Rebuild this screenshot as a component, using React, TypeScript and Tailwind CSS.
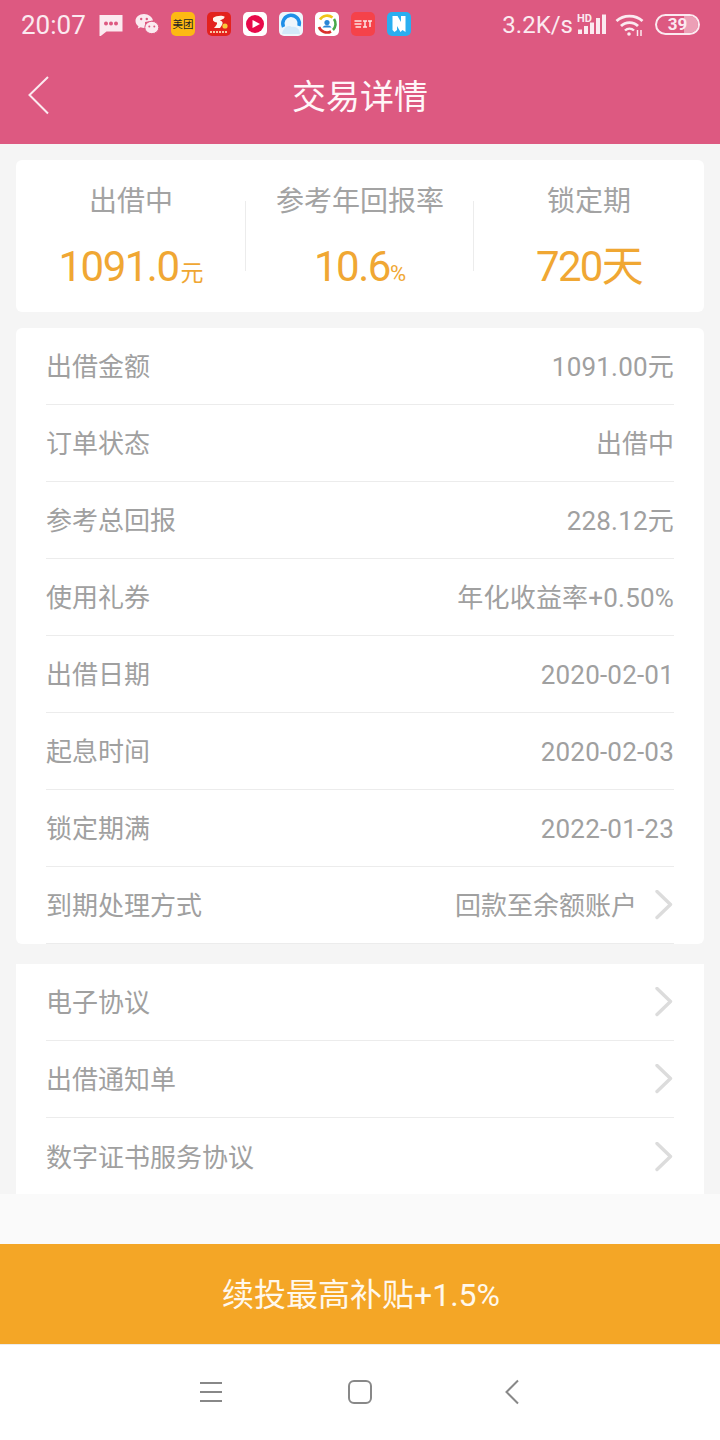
import React from "react";

const Chevron = () => (
  <svg width="20" height="30" viewBox="0 0 20 30" className="shrink-0" fill="none">
    <path d="M3 1.5 L16.5 14.5 L3 27.5" stroke="#dcdcdc" strokeWidth="3.4" strokeLinecap="round" strokeLinejoin="round" />
  </svg>
);

const Tile = ({ bg, children }: { bg: string; children: React.ReactNode }) => (
  <svg width="24" height="24" viewBox="0 0 24 24" className="shrink-0">
    <rect width="24" height="24" rx="5" fill={bg} />
    {children}
  </svg>
);

function StatusIcons() {
  return (
    <div className="ml-[13px] flex items-center gap-3">
      <svg width="24" height="24" viewBox="0 0 24 24" className="shrink-0">
        <path d="M0.5 3 H23.5 V19.5 H7.5 L0.5 25 Z" fill="#fbeaf0" />
        <circle cx="7" cy="11.5" r="2" fill="#dd5981" />
        <circle cx="12" cy="11.5" r="2" fill="#dd5981" />
        <circle cx="17" cy="11.5" r="2" fill="#dd5981" />
      </svg>
      <svg width="24" height="24" viewBox="0 0 24 24" className="shrink-0">
        <path d="M9 2 C4.2 2 0.5 5.2 0.5 9 C0.5 11.2 1.7 13 3.5 14.3 L2.8 16.6 L5.6 15.3 C7 15.8 8.5 16 10 15.9 L10 10 L18 8.5 C17.4 5 13.6 2 9 2 Z" fill="#fbeaf0" />
        <ellipse cx="16.8" cy="15.5" rx="7" ry="6.2" fill="#fbeaf0" stroke="#dd5981" strokeWidth="1" />
        <circle cx="6.2" cy="7" r="1.2" fill="#dd5981" />
        <circle cx="11.8" cy="7" r="1.2" fill="#dd5981" />
        <circle cx="14.3" cy="14.5" r="1" fill="#dd5981" />
        <circle cx="19.3" cy="14.5" r="1" fill="#dd5981" />
      </svg>
      <svg width="24" height="24" viewBox="0 0 24 24" className="shrink-0">
        <rect width="24" height="24" rx="5" fill="#fdb913" />
        <text x="12" y="16" textAnchor="middle" fontSize="10.5" fill="#222" fontFamily="'Noto Sans CJK SC', sans-serif">美团</text>
      </svg>
      <Tile bg="#e3211d">
        <path d="M6 6 C9 3.5 15 3 17.5 4.5 C18 6.5 15 7.5 13 8.5 C15 9 16.5 10.5 15 13 L13 16 L7 16 C9 14 10.5 12 10 10.5 C8.5 10.5 7 9.5 6 8.5 Z" fill="#fff4ee" />
        <circle cx="18" cy="14" r="2.6" fill="#f8c93a" />
        <path d="M3 20 H21" stroke="#f9c7a3" strokeWidth="1.8" strokeDasharray="2 1" />
      </Tile>
      <Tile bg="#ffffff">
        <circle cx="12" cy="12" r="9" fill="#e8094a" />
        <path d="M9.5 8 L17 12 L9.5 16 Z" fill="#fff" />
        <path d="M3 19 L8 21 L5 23 Z" fill="#fff" />
      </Tile>
      <Tile bg="#eef6fc">
        <path d="M4.5 15 A8.3 8.3 0 1 1 20 14" fill="none" stroke="#1f8fe8" strokeWidth="3.4" />
        <path d="M3 22 C4 16 9 12 13 15 C17 14 21 17 21 22 Z" fill="#d2e9fa" />
      </Tile>
      <Tile bg="#ffffff">
        <path d="M5 7.5 A8.5 8.5 0 0 1 17.5 5.5" fill="none" stroke="#f0c419" strokeWidth="2.6" />
        <path d="M19 7 A8.5 8.5 0 0 1 18 18" fill="none" stroke="#4aa84a" strokeWidth="2.6" />
        <path d="M16 19.5 A8.5 8.5 0 0 1 4 15" fill="none" stroke="#d9302c" strokeWidth="2.6" />
        <circle cx="12" cy="10.5" r="2.6" fill="#2a86d6" />
        <path d="M7.5 15.5 C9 12.5 15 12.5 16.5 15.5 Z" fill="#2a86d6" />
      </Tile>
      <Tile bg="#f5424a">
        <path d="M3.5 9 H10.5 M3.5 12 H10.5 M4.5 15 H10 M12 9 H16 M14 9 V15 M12 15 H16 M17 9 H21 M19 9 V15" stroke="#fde3e3" strokeWidth="1.5" />
      </Tile>
      <Tile bg="#2aaef0">
        <path d="M5.5 4 H10.5 L14 10 V4 H18.5 V20 L15.5 18 L13.5 20 L10 14 V18 L7.5 20 L5.5 18 Z" fill="#ffffff" />
      </Tile>
    </div>
  );
}

function StatusRight() {
  return (
    <div className="flex items-center">
      <span className="mt-[2px] text-[24px] leading-none text-[#fbeaf0]">3.2K/s</span>
      <svg width="32" height="24" viewBox="0 0 32 24" className="ml-[4px] shrink-0">
        <text x="0" y="9.5" fontSize="11" fontWeight="700" fill="#fbeaf0" fontFamily="Roboto, sans-serif">HD</text>
        <rect x="1" y="17.5" width="4" height="4.5" fill="#fbeaf0" />
        <rect x="7" y="14" width="4" height="8" fill="#fbeaf0" />
        <rect x="13" y="10.5" width="4" height="11.5" fill="#fbeaf0" />
        <rect x="19" y="6" width="4" height="16" fill="#fbeaf0" />
        <rect x="25" y="2.5" width="4" height="19.5" fill="#fbeaf0" />
      </svg>
      <svg width="30" height="24" viewBox="0 0 30 24" className="ml-[6px] shrink-0" fill="none">
        <path d="M1.5 9 C8.5 2.5 20.5 2.5 27.5 9" stroke="#fbeaf0" strokeWidth="2.8" />
        <path d="M6 14 C10.5 9.5 18.5 9.5 23 14" stroke="#fbeaf0" strokeWidth="2.8" />
        <path d="M10 18.5 C12.5 16 16.5 16 19 18.5" stroke="#fbeaf0" strokeWidth="2.4" />
        <circle cx="14" cy="22" r="1.8" fill="#fbeaf0" />
        <path d="M22.5 24 V18 M26 24 V18" stroke="#fbeaf0" strokeWidth="1.5" />
      </svg>
      <div className="relative ml-[10px] mr-5 flex h-[21px] w-[45px] items-center justify-center overflow-hidden rounded-full border-[2px] border-[#fbeaf0]">
        <div className="absolute top-0 right-0 bottom-0 w-[14px] bg-[#ec9fb6]" />
        <span className="relative text-[17px] leading-none font-bold text-[#fbeaf0]">39</span>
      </div>
    </div>
  );
}

const rows1: [string, string, boolean][] = [
  ["出借金额", "1091.00元", true],
  ["订单状态", "出借中", false],
  ["参考总回报", "228.12元", true],
  ["使用礼券", "年化收益率+0.50%", true],
  ["出借日期", "2020-02-01", true],
  ["起息时间", "2020-02-03", true],
  ["锁定期满", "2022-01-23", true],
];

function Row({ label, value, numeric, chevron, last }: { label: string; value?: string; numeric?: boolean; chevron?: boolean; last?: boolean }) {
  return (
    <div className={`flex h-[77px] items-center justify-between border-[#ececec] ${last ? "" : "border-b"}`}>
      <span className="pt-[2px] text-[26px] leading-none text-[#a0a0a0]">{label}</span>
      <div className="flex items-center gap-[17px]">
        {value && (
          <span className={`pt-[2px] text-[26px] leading-none text-[#a0a0a0] ${numeric ? "tracking-[0.2px]" : ""}`}>{value}</span>
        )}
        {chevron && <Chevron />}
      </div>
    </div>
  );
}

function Stat({ title, width, children, divider }: { title: string; width: string; children: React.ReactNode; divider?: boolean }) {
  return (
    <div className={`relative flex flex-col items-center ${width}`}>
      <span className="mt-[26px] text-[28px] leading-[32px] text-[#a3a3a3]">{title}</span>
      <div className="mt-[25px] flex items-baseline leading-[48px] text-[#f0a733]">{children}</div>
      {divider && <div className="absolute top-[41px] right-0 h-[70px] w-px bg-[#ececec]" />}
    </div>
  );
}

export default function App() {
  return (
    <div
      className="flex h-[1440px] w-[720px] flex-col overflow-hidden bg-[#f5f5f5]"
      style={{ fontFamily: "Roboto, 'Noto Sans CJK SC', sans-serif" }}
    >
      <header className="h-[144px] shrink-0 bg-[#dd5981]">
        <div className="flex h-[48px] items-center justify-between pl-[21px]">
          <div className="flex items-center">
            <span className="mt-[2px] text-[26px] leading-none text-[#fbeaf0]">20:07</span>
            <StatusIcons />
          </div>
          <StatusRight />
        </div>
        <div className="relative flex h-[96px] items-center justify-center">
          <svg width="24" height="42" viewBox="0 0 24 42" className="absolute top-[27px] left-[27px]" fill="none">
            <path d="M21 2 L2.5 20 L21 38.5" stroke="#fbeaf0" strokeWidth="2" />
          </svg>
          <span className="pt-[2px] text-[34px] leading-none text-[#fff6f8]">交易详情</span>
        </div>
      </header>

      <main className="flex-1 px-4 pt-4">
        <section className="flex h-[152px] rounded-[6px] bg-white">
          <Stat title="出借中" width="w-[230px]" divider>
            <span className="text-[42px] tracking-[-1.5px]">1091.0</span>
            <span className="ml-[2px] text-[23px]">元</span>
          </Stat>
          <Stat title="参考年回报率" width="w-[228px]" divider>
            <span className="text-[42px] tracking-[-1.5px]">10.6</span>
            <span className="text-[22px]">%</span>
          </Stat>
          <Stat title="锁定期" width="flex-1">
            <span className="text-[42px] tracking-[-1.7px]">720天</span>
          </Stat>
        </section>

        <section className="mt-4 h-[616px] rounded-[6px] bg-white px-[30px]">
          {rows1.map(([l, v, n]) => (
            <Row key={l} label={l} value={v} numeric={n} />
          ))}
          <Row label="到期处理方式" value="回款至余额账户" chevron />
        </section>

        <section className="mt-5 h-[230px] bg-white px-[30px]">
          <Row label="电子协议" chevron />
          <Row label="出借通知单" chevron />
          <Row label="数字证书服务协议" chevron last />
        </section>
      </main>

      <div className="h-[50px] shrink-0 bg-[#fafafa]" />
      <button className="h-[100px] w-full shrink-0 bg-[#f4a626] pt-[2px] pl-[2px] text-[32px] leading-none text-[#fff8ec]">续投最高补贴+1.5%</button>
      <nav className="flex h-[96px] shrink-0 items-center border-t border-[#ececec] bg-white pb-[2px] pl-[200px]">
        <svg width="22" height="22" viewBox="0 0 22 22" fill="none" className="shrink-0">
          <path d="M0 2 H22 M0 11 H22 M0 20 H22" stroke="#888" strokeWidth="2" />
        </svg>
        <svg width="24" height="24" viewBox="0 0 24 24" fill="none" className="ml-[126px] shrink-0">
          <rect x="1" y="1" width="22" height="22" rx="5" stroke="#888" strokeWidth="2" />
        </svg>
        <svg width="14" height="26" viewBox="0 0 14 26" fill="none" className="ml-[133px] shrink-0">
          <path d="M13 1.5 L1.5 13 L13 24.5" stroke="#888" strokeWidth="2" />
        </svg>
      </nav>
    </div>
  );
}
